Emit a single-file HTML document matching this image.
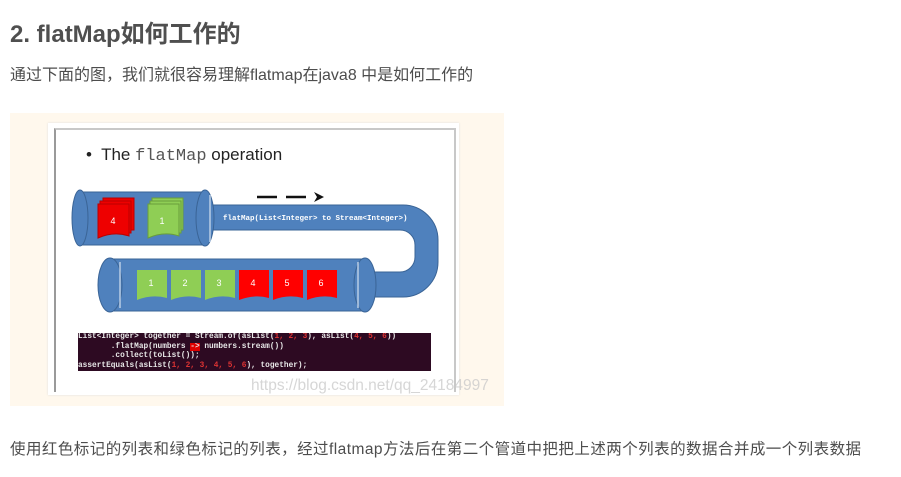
<!DOCTYPE html>
<html><head><meta charset="utf-8"><style>
body{margin:0;background:#fff;width:901px;height:477px;overflow:hidden;position:relative;font-family:"Liberation Sans","Noto Sans CJK SC",sans-serif;color:#4d4d4d}
.h{position:absolute;left:10px;top:19px;font-size:24px;font-weight:bold;color:#4f4f4f;margin:0;line-height:32px}
.p{position:absolute;left:10px;font-size:15.5px;line-height:22px;white-space:nowrap}
.code{position:absolute;left:78px;top:333px;width:353px;height:38px;background:#2d0a22;color:#e8e8e8;font:bold 7.8px/9.5px "Liberation Mono",monospace;white-space:pre;overflow:hidden}
.r{color:#d33}
</style></head><body>
<h2 class="h">2. flatMap如何工作的</h2>
<div class="p" style="top:65px;font-size:16px">通过下面的图，我们就很容易理解flatmap在java8 中是如何工作的</div>
<div style="position:absolute;left:10px;top:113px;width:494px;height:293px;background:#fff8ed"></div>
<div style="position:absolute;left:48px;top:123px;width:411px;height:272px;background:#fff;box-shadow:0 0 2px #ddd"></div>
<div style="position:absolute;left:54px;top:128px;width:398px;height:262px;border-left:2px solid #9a9a9a;border-top:2px solid #c8c8c8;border-right:2px solid #c8c8c8"></div>
<div style="position:absolute;left:86px;top:145px;font-size:17px;color:#222;white-space:nowrap">•&nbsp; The <span style="font-family:'Liberation Mono',monospace;color:#555">flatMap</span> operation</div>
<svg style="position:absolute;left:0;top:0" width="901" height="477">
<g fill="#4f81bd" stroke="#3a6496" stroke-width="1">
<path d="M205 205 H403 A35 35 0 0 1 438 240 V262 A35 35 0 0 1 403 297 H370 V272 H400 A15 15 0 0 0 415 257 V245 A15 15 0 0 0 400 230 H205 Z"/>
<rect x="80" y="192" width="125" height="53"/>
<ellipse cx="80" cy="218" rx="8" ry="28"/>
<ellipse cx="205" cy="218" rx="9" ry="28"/>
<rect x="110" y="259" width="255" height="52"/>
<ellipse cx="110" cy="285" rx="12" ry="27"/>
<ellipse cx="365" cy="285" rx="11" ry="27"/>
</g>
<g stroke="#b9cde5" stroke-width="1.5" fill="none"><path d="M210 195 V242"/><path d="M358 262 V308"/><path d="M120 262 V308"/></g>
<g fill="#e00" stroke="#b00"><path d="M103 198 h31 v32 h-31z"/><path d="M100 201 h31 v32 h-31z"/><path d="M98 204 h31 v32 q-15 -5 -31 2z"/></g>
<g fill="#8fce55" stroke="#6a9e3a"><path d="M152 198 h31 v32 h-31z"/><path d="M150 201 h31 v32 h-31z"/><path d="M148 204 h31 v32 q-15 -5 -31 2z"/></g>
<g fill="#fff" font-size="9" font-family="Liberation Sans" text-anchor="middle"><text x="113" y="224">4</text><text x="162" y="224">1</text></g>
<g font-size="9" font-family="Liberation Sans" text-anchor="middle" fill="#fff">
<path d="M137 270h30v28q-15-4-30 2z" fill="#8fce55"/><text x="151" y="286">1</text>
<path d="M171 270h30v28q-15-4-30 2z" fill="#8fce55"/><text x="185" y="286">2</text>
<path d="M205 270h30v28q-15-4-30 2z" fill="#8fce55"/><text x="219" y="286">3</text>
<path d="M239 270h30v28q-15-4-30 2z" fill="#f00"/><text x="253" y="286">4</text>
<path d="M273 270h30v28q-15-4-30 2z" fill="#f00"/><text x="287" y="286">5</text>
<path d="M307 270h30v28q-15-4-30 2z" fill="#f00"/><text x="321" y="286">6</text>
</g>
<text x="223" y="220" fill="#fff" font-size="7.5" font-family="Liberation Mono" font-weight="bold">flatMap(List&lt;Integer&gt; to Stream&lt;Integer&gt;)</text>
<g stroke="#111" stroke-width="2.5"><path d="M257 197h20M286 197h20"/></g>
<path d="M314 192 L324 197 L314 202 L317 197Z" fill="#111"/>
</svg>
<div class="code">List&lt;Integer&gt; together = Stream.of(asList(<span class="r">1, 2, 3</span>), asList(<span class="r">4, 5, 6</span>))
       .flatMap(numbers <span style="background:#d00">-&gt;</span> numbers.stream())
       .collect(toList());
assertEquals(asList(<span class="r">1, 2, 3, 4, 5, 6</span>), together);</div>
<div style="position:absolute;left:251px;top:377px;font-size:15.5px;color:rgba(200,200,200,0.75);white-space:nowrap">https://blog.csdn.net/qq_24184997</div>
<div class="p" style="top:439px;letter-spacing:0.45px">使用红色标记的列表和绿色标记的列表，经过flatmap方法后在第二个管道中把把上述两个列表的数据合并成一个列表数据</div>
</body></html>
